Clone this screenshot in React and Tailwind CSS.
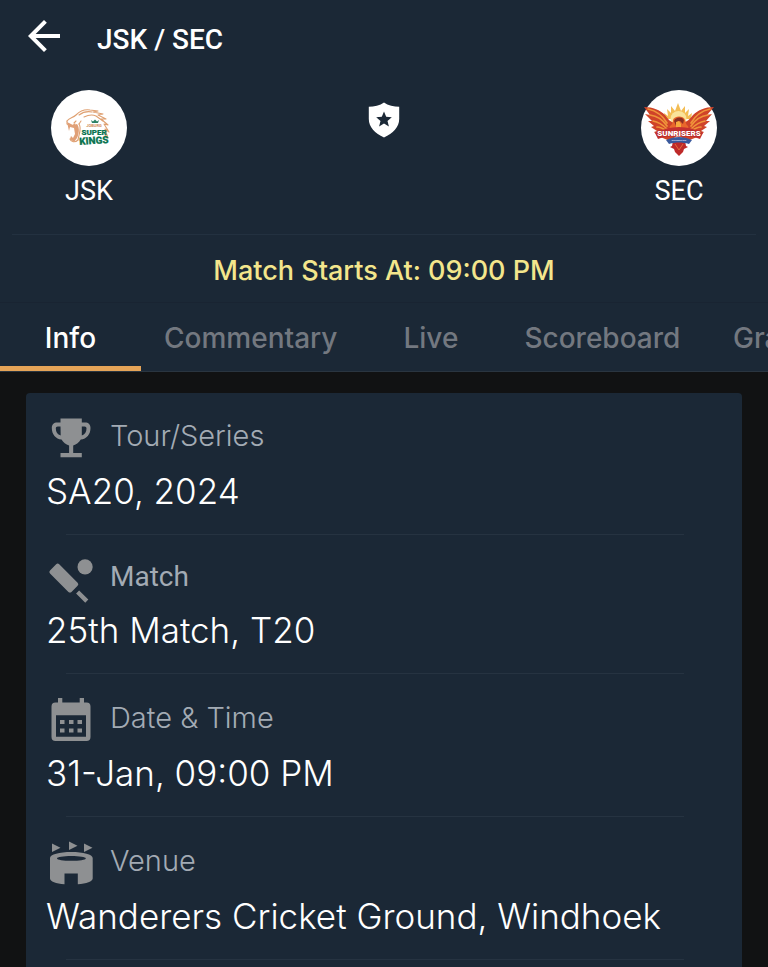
import { useState } from "react";
import { MdArrowBack, MdSportsCricket } from "react-icons/md";

const tabs = ["Info", "Commentary", "Live", "Scoreboard", "Graph"];

const details = [
  { label: "Tour/Series", value: "SA20, 2024", Icon: TrophyIcon },
  { label: "Match", value: "25th Match, T20", Icon: MdSportsCricket, compact: true },
  { label: "Date & Time", value: "31-Jan, 09:00 PM", Icon: CalendarIcon },
  { label: "Venue", value: "Wanderers Cricket Ground, Windhoek", Icon: StadiumIcon },
];

function TrophyIcon({ className }) {
  return (
    <svg viewBox="0 0 52 52" className={className} fill="currentColor" aria-hidden="true">
      <path
        fillRule="evenodd"
        d="M15.500 6.500h21.300v4h3.200c3.500 0 5.500 2 5.500 5.500 0 6.500-4 11-9.700 11.500-1.800 3-4.300 5-7.600 6V41h8.600v4.300H15.500V41h8.600v-7.500c-3.300-1-5.800-3-7.600-6C10.800 27 6.800 22.500 6.800 16c0-3.500 2-5.500 5.500-5.500h3.200zm0 8h-2.700c-1.300 0-2 .700-2 2 0 3.500 1.700 6.200 4.900 7zm21.300 0v9c3-.800 4.700-3.500 4.700-7 0-1.300-.700-2-2-2z"
      />
    </svg>
  );
}

function CalendarIcon({ className }) {
  return (
    <svg viewBox="0 0 52 52" className={className} fill="currentColor" aria-hidden="true">
      <path
        fillRule="evenodd"
        d="M13 4h4.300v4.500h17.400V4H39v4.500h2.500a4 4 0 0 1 4 4v30.500a4 4 0 0 1-4 4h-31a4 4 0 0 1-4-4V12.500a4 4 0 0 1 4-4H13zM11 21.300v21.400h30V21.300z"
      />
      <path d="M15 26h4.500v4H15zM24 26h4.500v4H24zM32.500 26h4.500v4h-4.500zM15 34.500h4.500v4H15zM24 34.500h4.500v4H24zM32.500 34.500h4.500v4h-4.500z" />
    </svg>
  );
}

function StadiumIcon({ className }) {
  return (
    <svg viewBox="0 0 52 52" className={className} fill="currentColor" aria-hidden="true">
      <path d="M7 6.500l8.500 4.300L7 15zM24 4.500l8.500 4.300L24 13zM39 6.500l8.500 4.300L39 15z" />
      <path
        fillRule="evenodd"
        d="M26.300 15C14.500 15 5 17.500 5 21v20.500c0 3 6 5 14.500 5.700V36.500h13.300v10.700C41.500 46.500 47.700 44.500 47.700 41.500V21c0-3.500-9.500-6-21.400-6zm0 8.800c-8 0-14.300-1.200-14.300-2.400s6.300-2.300 14.300-2.300 14.500 1.100 14.500 2.300-6.500 2.400-14.500 2.400z"
      />
    </svg>
  );
}

function ShieldStar() {
  return (
    <svg viewBox="0 0 32 36" className="mt-3 h-9 w-8 text-white" fill="currentColor" aria-hidden="true">
      <path
        fillRule="evenodd"
        d="M16 .500C12 3.500 6 4.500.800 4.700V17c0 8 6.200 14.500 15.200 18.400C25 31.500 31.200 25 31.200 17V4.700C26 4.500 20 3.500 16 .500zm0 9.100l2.200 5.200 5.600.500-4.300 3.700 1.400 5.500L16 21.500l-4.900 3 1.400-5.500-4.300-3.700 5.600-.500z"
      />
    </svg>
  );
}

function KingsLogo() {
  return (
    <svg viewBox="0 0 76 76" className="size-[76px]" role="img" aria-label="Super Kings">
      <circle cx="38" cy="38" r="38" fill="#fff" />
      <g fill="none" stroke="#dfa071" strokeWidth="1.100" strokeLinecap="round" strokeLinejoin="round">
        <path d="M16 31c2-3 6-3 9-6 3-3 8-6 14-5l8 1-5 1 10 2-5 1 8 4-5 0 7 6-4-1 5 8-4-3 3 9-3-3" />
        <path d="M28 25c4-3 8-4 13-3M45 26l7 5M33 27c4-2 8-3 12-1" />
        <path d="M16 31l0 3 5 2 3-2M25 31l-2 2M28 34c3 4 0 10-1 16" />
        <path d="M19 49c1 3 5 4 8 1M29 50l2 4M30 31l-2 3" />
      </g>
      <path
        d="M16 32l6 3 4-1c3 4 2 10 0 14l-3 4-4-3 1-3 2 2 2-4-1-6-4-1-1 4z"
        fill="#e0a077"
      />
      <path d="M40 30l2 1.500 2-2 2 2 2-1.500-1 3h-6z" fill="#2d8065" />
      <text x="43" y="37" textAnchor="middle" fontSize="4" fontWeight="700" fill="#d08a5c" className="font-['Roboto',sans-serif]">
        JOBURG
      </text>
      <g fill="#0b7451" stroke="#0b7451" strokeWidth=".2" textAnchor="middle" fontWeight="900">
        <text x="43" y="45" fontSize="8" className="font-['Roboto',sans-serif]">
          SUPER
        </text>
        <text x="43" y="54" fontSize="10" className="font-['Roboto',sans-serif]" transform="rotate(-4 43 52)">
          KINGS
        </text>
      </g>
    </svg>
  );
}

function SunrisersLogo() {
  return (
    <svg viewBox="0 0 76 76" className="size-[76px]" role="img" aria-label="Sunrisers">
      <circle cx="38" cy="38" r="38" fill="#fff" />
      {/* sun */}
      <path
        d="M24 29l-1-6 4 3-1-7 4 4 0-7 4 5 3-8 3 8 4-5 0 7 4-4-1 7 4-3-1 6z"
        fill="#f3bd54"
      />
      <circle cx="37.500" cy="29" r="8" fill="#fae39a" />
      {/* wings */}
      <path
        d="M3 17c9 0 16 3 21 8 3 4 5 7 10 8l3 12-8 6-12-5-4-4 3-1-6-4 3-1-6-5 4 0-7-7 5 1z"
        fill="#cf4329"
      />
      <path
        d="M73 17c-9 0-16 3-21 8-3 4-6 7-11 8l-4 12 9 6 13-5 4-4-3-1 6-4-3-1 6-5-4 0 6-7-5 1z"
        fill="#cf4329"
      />
      <g fill="none" stroke="#f0953a" strokeWidth="1.700" strokeLinecap="round">
        <path d="M7 19c9 2 15 7 19 14M9 25c8 1 13 5 17 11M12 31c6 1 10 4 14 8M16 37c4 0 7 2 10 4" />
        <path d="M69 19c-9 2-15 7-19 14M67 25c-8 1-13 5-17 11M64 31c-6 1-10 4-14 8M60 37c-4 0-7 2-10 4" />
      </g>
      {/* body, head and tail */}
      <path d="M29 36c2-1 3-3 3-6 1-4 10-5 12 0 1 3 1 5 3 6l1 5H28z" fill="#e9672c" />
      <path d="M33 31c1-4 8-5 10-1l-1 4-3-3-3 1-1 4z" fill="#8d2f22" />
      <path d="M35 32l3-1 2 3 0 5-5 1z" fill="#f6a93e" />
      <path d="M32 51h12l1 5 2 1-4 2-1 3-4 4-4-4-1-3-4-2 2-1z" fill="#be2a29" />
      <path d="M34 54l4 6 4-6" fill="none" stroke="#e46a39" />
      <path d="M14 43c15-8 33-8 48 0l-3 6c-14-5-28-5-42 0z" fill="#c33030" />
      <text
        x="38"
        y="46"
        textAnchor="middle"
        fontSize="8"
        fontWeight="900"
        fill="#fff"
        stroke="#b72c2c"
        strokeWidth="1.200"
        paintOrder="stroke"
        className="font-['Roboto',sans-serif]"
      >
        SUNRISERS
      </text>
      <path d="M25 50c9-4 17-4 26 0l-3 4c-7-2-13-2-20 0z" fill="#39599c" />
      <text x="38" y="51" textAnchor="middle" fontSize="2" fontWeight="700" fill="#e6eaff" className="font-['Roboto',sans-serif]">
        EASTERN CAPE
      </text>
    </svg>
  );
}

function Team({ name, children }) {
  return (
    <div className="flex flex-col items-center gap-[9px]">
      {children}
      <p className="font-['Roboto',sans-serif] text-[27px] leading-8">{name}</p>
    </div>
  );
}

function DetailRow({ label, value, Icon, compact }) {
  return (
    <div className="pt-[26px] first:pt-[25px]">
      <dt className="flex items-start gap-[13px] pl-[19px] text-[#a3abb4]">
        <Icon className="-mt-[6px] -mb-[14px] size-[52px] shrink-0 text-[#8e9092]" />
        {compact ? (
          <span className="font-['Roboto',sans-serif] text-[28px] leading-8">{label}</span>
        ) : (
          <span className="text-[29px] leading-9 font-light">{label}</span>
        )}
      </dt>
      <dd className="mt-[15px] px-5 text-[35px] leading-[44px] font-light text-white">{value}</dd>
      <hr className="mt-[21px] mr-[58px] ml-10 border-[#263341]" />
    </div>
  );
}

export default function App() {
  const [active, setActive] = useState("Info");

  return (
    <div className="min-h-screen overflow-x-hidden bg-[#111213] font-['Inter',sans-serif] text-white">
      <header className="bg-[#1b2836]">
        <div className="flex items-center gap-[29px] px-5 pt-3">
          <button type="button" aria-label="Back">
            <MdArrowBack className="size-12" />
          </button>
          <h1 className="pt-2 font-['Roboto',sans-serif] text-[28px] leading-9 font-medium">JSK / SEC</h1>
        </div>

        <div className="flex items-start justify-between px-[51px] pt-[30px] pb-[27px]">
          <Team name="JSK">
            <KingsLogo />
          </Team>
          <ShieldStar />
          <Team name="SEC">
            <SunrisersLogo />
          </Team>
        </div>

        <hr className="mx-3 border-[#233140]" />
        <p className="pt-[18px] pb-[13px] text-center text-[27px] leading-9 font-medium text-[#f3e68c]">
          Match Starts At: 09:00 PM
        </p>
      </header>

      <nav role="tablist" className="flex overflow-hidden border-t border-b border-t-[#192432] border-b-[#2a3540] bg-[#1b2836]">
        {tabs.map((tab) => (
          <button
            key={tab}
            type="button"
            role="tab"
            aria-selected={active === tab}
            onClick={() => setActive(tab)}
            className={`min-w-[141px] shrink-0 border-b-5 px-[23px] pt-[17px] pb-[10px] text-[28px] leading-9 font-medium ${
              active === tab ? "border-[#e5a458] text-white" : "border-transparent text-[#737880]"
            }`}
          >
            {tab}
          </button>
        ))}
      </nav>

      <main className="px-[26px] pt-[21px]">
        <dl className="rounded-t-sm bg-[#1b2836] pb-5">
          {details.map((item) => (
            <DetailRow key={item.label} {...item} />
          ))}
        </dl>
      </main>
    </div>
  );
}
